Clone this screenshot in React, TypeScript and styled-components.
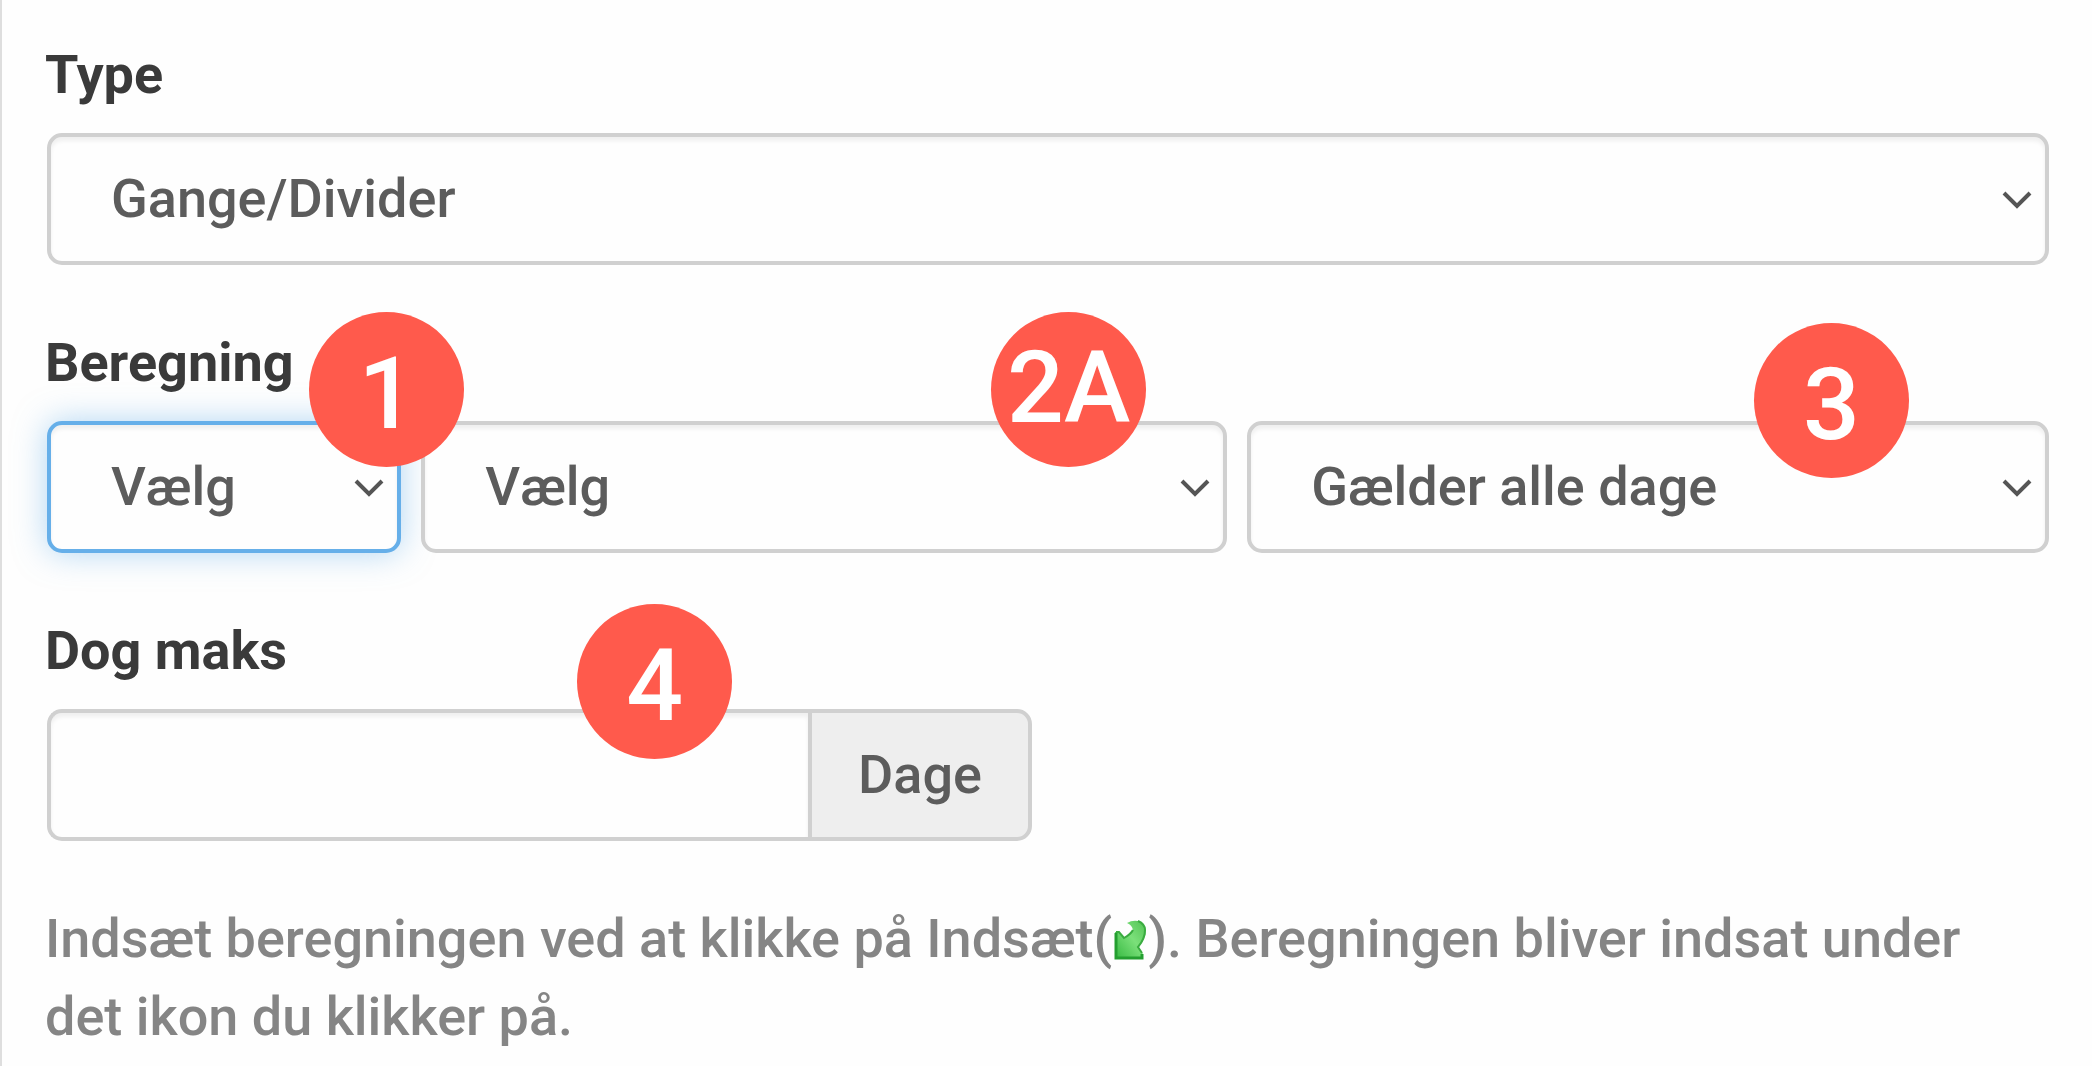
import React from 'react';
import styled, { createGlobalStyle, css } from 'styled-components';

const GlobalStyle = createGlobalStyle`
  *, *::before, *::after { box-sizing: border-box; }
  body {
    margin: 0;
    background: #fefefe;
    font-family: Roboto, "Liberation Sans", sans-serif;
    font-size: 54px;
    font-weight: 500;
    line-height: 78px;
    color: #5c5c5c;
  }
`;

const Panel = styled.form`
  display: flex;
  flex-direction: column;
  gap: 59px;
  min-height: 100vh;
  padding: 36px 43px 8px 45px;
  border-left: 2px solid #dedede;
`;

const Field = styled.div`
  display: flex;
  flex-direction: column;
  gap: 19px;
`;

const Label = styled.label`
  align-self: flex-start;
  margin-left: -2px;
  font-weight: 700;
  color: #3a3a3a;
`;

const CalcRow = styled.div`
  display: grid;
  grid-template-columns: 354fr 805fr 801fr;
  gap: 20px;
`;

const Cell = styled.div`
  position: relative;
  min-width: 0;
`;

const control = css`
  display: block;
  width: 100%;
  height: 132px;
  margin: 0;
  border: 4px solid #d0d0d0;
  border-radius: 15px;
  background: #fefefe;
  box-shadow: inset 0 4px 4px rgba(0, 0, 0, 0.06);
  color: inherit;
  font: inherit;
  outline: none;
`;

const Select = styled.select<{ $active?: boolean }>`
  ${control}
  appearance: none;
  padding: 0 60px;
  ${(p) =>
    p.$active &&
    css`
      border-color: #66afe9;
      box-shadow: inset 0 4px 4px rgba(0, 0, 0, 0.06), 0 0 32px rgba(102, 175, 233, 0.5);
    `}
`;

const Chevron = styled.svg`
  position: absolute;
  top: 56px;
  right: 16px;
  width: 32px;
  height: 24px;
  pointer-events: none;
`;

const Group = styled.div`
  display: flex;
  width: 49.2%;
`;

const InputCell = styled(Cell)`
  flex: 1;
`;

const Input = styled.input`
  ${control}
  padding: 0 46px;
  border-right: 0;
  border-radius: 15px 0 0 15px;
`;

const Addon = styled.span`
  display: flex;
  align-items: center;
  padding: 0 46px;
  border: 4px solid #d0d0d0;
  border-radius: 0 15px 15px 0;
  background: #eee;
`;

const Badge = styled.span<{ $top: number; $right: number; $wide?: boolean }>`
  position: absolute;
  z-index: 1;
  top: ${(p) => p.$top}px;
  right: ${(p) => p.$right}px;
  display: flex;
  align-items: center;
  justify-content: center;
  width: 155px;
  height: 155px;
  padding: ${(p) => (p.$wide ? '0 0 4px' : '8px 0 0')};
  border-radius: 50%;
  background: #ff5a4c;
  color: #fff;
  font-size: 100px;
  line-height: 100px;
`;

const Help = styled.p`
  margin: 0 0 0 -2px;
  padding-right: 40px;
  color: #858585;
`;

const InsertIcon = styled.svg`
  width: 36px;
  height: 42px;
  vertical-align: -4px;
`;

type PickerProps = { id: string; value: string; label?: string; active?: boolean };

function Picker({ id, value, label, active }: PickerProps) {
  return (
    <>
      <Select id={id} aria-label={label} $active={active} defaultValue={value}>
        <option>{value}</option>
      </Select>
      <Chevron viewBox="0 0 32 24" fill="none" stroke="#555" strokeWidth="4" aria-hidden="true">
        <path d="M3 4 L16 17 L29 4" />
      </Chevron>
    </>
  );
}

export default function App() {
  return (
    <>
      <GlobalStyle />
      <Panel>
        <Field>
          <Label htmlFor="type">Type</Label>
          <Cell>
            <Picker id="type" value="Gange/Divider" />
          </Cell>
        </Field>

        <Field>
          <Label htmlFor="operator">Beregning</Label>
          <CalcRow>
            <Cell>
              <Picker id="operator" value="Vælg" active />
              <Badge $top={-109} $right={-63}>1</Badge>
            </Cell>
            <Cell>
              <Picker id="amount" label="Værdi" value="Vælg" />
              <Badge $top={-109} $right={81} $wide>2A</Badge>
            </Cell>
            <Cell>
              <Picker id="days" label="Dage" value="Gælder alle dage" />
              <Badge $top={-98} $right={140}>3</Badge>
            </Cell>
          </CalcRow>
        </Field>

        <Field>
          <Label htmlFor="max">Dog maks</Label>
          <Group>
            <InputCell>
              <Input id="max" type="text" />
              <Badge $top={-105} $right={76}>4</Badge>
            </InputCell>
            <Addon>Dage</Addon>
          </Group>
        </Field>

        <Help>
          Indsæt beregningen ved at klikke på Indsæt(
          <InsertIcon viewBox="0 0 36 42" role="img" aria-label="Indsæt">
            <defs>
              <linearGradient id="leaf" x1="1" y1="0" x2="0" y2="1">
                <stop offset="0" stopColor="#52c254" />
                <stop offset="0.45" stopColor="#7be07a" />
                <stop offset="1" stopColor="#35b840" />
              </linearGradient>
            </defs>
            <path
              d="M3 13 H7 L12 19 Q19 15 21 11 Q20 6 15 4 Q20 1 26 2 Q33 5 34 11 Q34 20 26 28 L31 35 V40 H3 Z"
              fill="url(#leaf)"
            />
            <path d="M4 14 V39 H30 V35" fill="none" stroke="#249f30" strokeWidth="3" />
            <path
              d="M4 13 H7 L12 19 Q19 15 21 11 M26 2 Q33 5 33 11 Q33 20 26 28 L30 34"
              fill="none"
              stroke="#3aac40"
              strokeWidth="2"
            />
          </InsertIcon>
          ). Beregningen bliver indsat under det ikon du klikker på.
        </Help>
      </Panel>
    </>
  );
}
